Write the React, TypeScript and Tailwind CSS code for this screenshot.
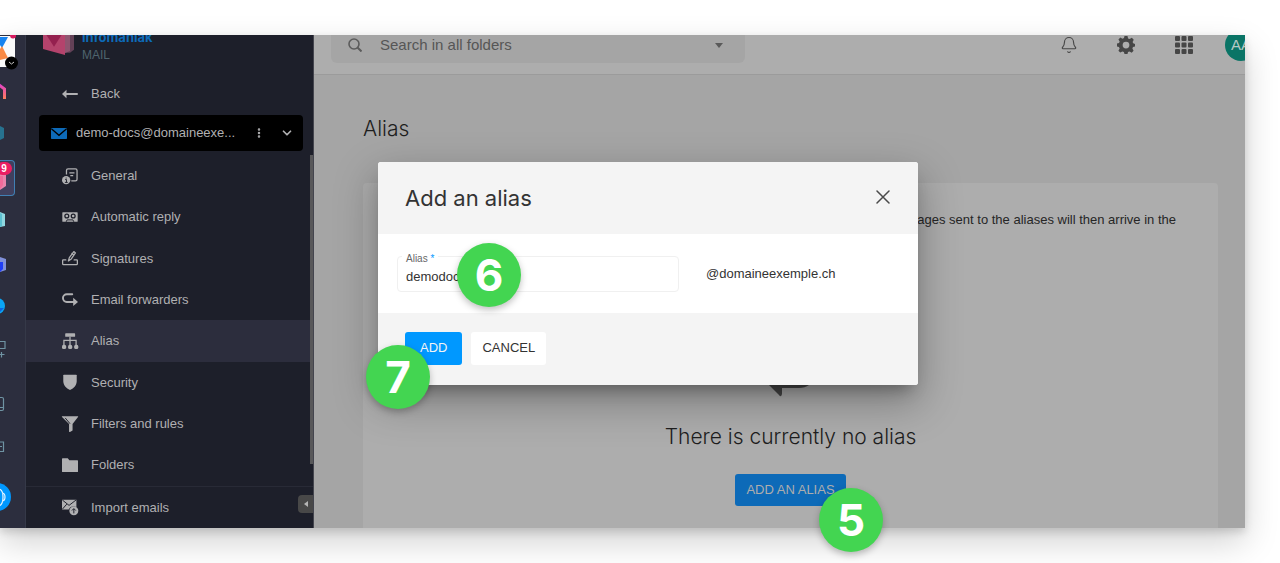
import React, { useState } from 'react';
import { Bell, ChevronDown, MoreVertical } from 'lucide-react';

interface MenuItem {
  label: string;
  icon: React.ReactNode;
  active?: boolean;
}

const MenuIcon: React.FC<{ children: React.ReactNode }> = ({ children }) => (
  <svg viewBox="0 0 50 50" className="h-4 w-4 shrink-0 overflow-visible" fill="currentColor" stroke="none" aria-hidden="true">
    {children}
  </svg>
);

const menuItems: MenuItem[] = [
  {
    label: 'General',
    icon: (
      <MenuIcon>
        <path d="M14 20V8a5 5 0 0 1 5-5h23a5 5 0 0 1 5 5v27a5 5 0 0 1-5 5H29M23 15h16M26 24h9" fill="none" stroke="currentColor" strokeWidth="4" />
        <circle cx="13" cy="38" r="13" />
        <path d="M10 36h4v9M9 45h9M13 30v3" fill="none" stroke="#1d1f2a" strokeWidth="3" />
      </MenuIcon>
    ),
  },
  {
    label: 'Automatic reply',
    icon: (
      <MenuIcon>
        <rect x="1" y="10" width="48" height="30" rx="2" />
        <g fill="none" stroke="#1d1f2a" strokeWidth="4">
          <circle cx="15" cy="22" r="6" />
          <circle cx="35" cy="22" r="6" />
          <path d="M13 40l3-6h18l3 6" strokeWidth="3" />
        </g>
      </MenuIcon>
    ),
  },
  {
    label: 'Signatures',
    icon: (
      <MenuIcon>
        <g fill="none" stroke="currentColor" strokeWidth="4" strokeLinejoin="round" strokeLinecap="round">
          <path d="M12 31H4a2 2 0 0 0-2 2v10a3 3 0 0 0 3 3h40a3 3 0 0 0 3-3V33a2 2 0 0 0-2-2h-8" />
          <path d="M20 34l3-10L37 5l5 4-14 20zM31 11l6 5" />
        </g>
      </MenuIcon>
    ),
  },
  {
    label: 'Email forwarders',
    icon: (
      <MenuIcon>
        <path d="M32 7H15a12 12 0 0 0 0 24h22" fill="none" stroke="currentColor" strokeWidth="6" strokeLinecap="round" />
        <path d="M35 18l15 13-15 13z" />
      </MenuIcon>
    ),
  },
  {
    label: 'Alias',
    active: true,
    icon: (
      <MenuIcon>
        <rect x="10" y="1" width="31" height="11" rx="2" />
        <path d="M25 12v30M6 42V23h38v19" fill="none" stroke="currentColor" strokeWidth="4" />
        <rect x="0" y="37" width="13" height="13" rx="5" />
        <rect x="19" y="37" width="13" height="13" rx="5" />
        <rect x="38" y="37" width="13" height="13" rx="5" />
      </MenuIcon>
    ),
  },
  {
    label: 'Security',
    icon: (
      <MenuIcon>
        <path d="M6 2h38a2 2 0 0 1 2 2v18c0 14-9 22-21 28C13 44 4 36 4 22V4a2 2 0 0 1 2-2z" />
      </MenuIcon>
    ),
  },
  {
    label: 'Filters and rules',
    icon: (
      <MenuIcon>
        <path d="M2 1h47a1 1 0 0 1 1 2L33 25v20l-8 5a2 2 0 0 1-3-2V25L0 3a1 1 0 0 1 2-2z" />
        <path d="M10 6l15 18" stroke="#1d1f2a" strokeWidth="3" />
      </MenuIcon>
    ),
  },
  {
    label: 'Folders',
    icon: (
      <MenuIcon>
        <path d="M2 4h16l5 6h25a2 2 0 0 1 2 2v33a2 2 0 0 1-2 2H2a2 2 0 0 1-2-2V6a2 2 0 0 1 2-2z" />
      </MenuIcon>
    ),
  },
  {
    label: 'Import emails',
    icon: (
      <MenuIcon>
        <path d="M0 2h45v24A16 16 0 0 0 21 33H0z" />
        <path d="M1 3l21 17L44 3M1 32l14-16" fill="none" stroke="#1d1f2a" strokeWidth="3" />
        <circle cx="37" cy="37" r="14" />
        <path d="M37 45V31M31 36l6-6 6 6" fill="none" stroke="#1d1f2a" strokeWidth="3" />
      </MenuIcon>
    ),
  },
];

const AppRail = () => (
  <nav aria-label="Apps" className="flex w-[25px] shrink-0 flex-col overflow-hidden bg-[#2c2e3e]">
    <a href="#workspace" className="block h-[37px]" aria-label="Workspace">
      <svg viewBox="0 35 25 37" className="h-full w-full">
        <path d="M0 36h15v31H0z" fill="#fafafa" />
        <path d="M10 35h6a3 3 0 0 1-6 1z" fill="#d81b60" />
        <path d="M0 37h8L2 48l-2-3z" fill="#1583f0" />
        <path d="M2 46l6 12-8 2V49z" fill="#f98a45" />
        <circle cx="11.500" cy="63" r="6.500" />
        <path d="M9 62l2.500 2L14 62" fill="none" stroke="#ccc" />
      </svg>
    </a>
    <a href="#home" className="block h-10" aria-label="Home">
      <svg viewBox="0 72 25 40" className="h-full w-full">
        <defs>
          <linearGradient id="home" x1="0" y1="0" x2="0" y2="1">
            <stop offset="0" stopColor="#e040c8" />
            <stop offset="1" stopColor="#ff7f5a" />
          </linearGradient>
        </defs>
        <path d="M-2 84l6.500 5v10" fill="none" stroke="url(#home)" strokeWidth="3" />
      </svg>
    </a>
    <a href="#drive" className="block h-11" aria-label="Drive">
      <svg viewBox="0 112 25 44" className="h-full w-full">
        <path d="M0 126l4 2v10l-4 2z" fill="#27728f" />
      </svg>
    </a>
    <a href="#mail" className="relative my-1 block h-9 w-[15px] rounded-r border border-l-0 border-[#4180b4] bg-[#40405e]" aria-label="Mail">
      <svg viewBox="0 161 14 34" className="h-full w-full">
        <path d="M0 174h6v12l-6 4z" fill="#e884ac" />
        <path d="M0 176h3v9l-3 4z" fill="#f06a9b" />
      </svg>
      <span className="absolute top-px -left-1 flex h-[13px] w-4 items-center justify-center rounded-full bg-[#ea1e63] text-[10px] font-bold text-white">9</span>
    </a>
    <a href="#calendar" className="block h-[42px]" aria-label="Calendar">
      <svg viewBox="0 200 25 42" className="h-full w-full">
        <path d="M0 212l5 2v12l-5 1z" fill="#8fd6df" />
        <path d="M0 213l2 1v12l-2 1z" fill="#5cbfd0" />
      </svg>
    </a>
    <a href="#chat" className="block h-11" aria-label="Chat">
      <svg viewBox="0 242 25 44" className="h-full w-full">
        <path d="M0 257l6 2v11l-6 2z" fill="#8090d8" />
        <path d="M0 262h3v7l-3 3z" fill="#1f3df5" />
      </svg>
    </a>
    <a href="#sites" className="block h-[41px]" aria-label="Sites">
      <svg viewBox="0 286 25 41" className="h-full w-full">
        <circle cx="-3" cy="306" r="8" fill="#0aa5f5" />
        <path d="M0 308h4l-4 4z" fill="#0c63e0" />
      </svg>
    </a>
    <a href="#more" className="block h-[47px]" aria-label="More apps">
      <svg viewBox="0 327 25 47" className="h-full w-full" fill="none" stroke="#6f93a3">
        <path d="M0 341.500h5v7H0M-1 354.500h5.500M1.500 352v5.500" strokeWidth="1.200" />
      </svg>
    </a>
    <a href="#devices" className="block h-[51px]" aria-label="Devices">
      <svg viewBox="0 374 25 51" className="h-full w-full" fill="none" stroke="#6f93a3">
        <path d="M0 397.500h2q1.500 0 1.500 1.500v10q0 1.500-1.500 1.500H0M0 407.500h3" strokeWidth="1.200" />
      </svg>
    </a>
    <a href="#logout" className="block h-[43px]" aria-label="Sign out">
      <svg viewBox="0 425 25 43" className="h-full w-full" fill="none" stroke="#6f93a3">
        <path d="M0 442h3.500v9.500H0M0 446.500h2" strokeWidth="1.200" />
      </svg>
    </a>
    <a href="#support" className="block h-[58px]" aria-label="Support">
      <svg viewBox="0 468 25 58" className="h-full w-full">
        <circle cx="-3" cy="497" r="14" fill="#0098ff" />
        <path d="M-2 489c4 0 5 4 5 8s-1 8-4 9M2 493q3 0 3 4t-3 4" fill="none" stroke="#e6f4ff" strokeWidth="1.200" />
      </svg>
    </a>
  </nav>
);

const Sidebar = () => (
  <aside className="relative flex w-[289px] shrink-0 flex-col border-x border-l-[#353948] border-r-[#44454e] bg-[#1d1f2a] text-[13px] text-[#b0b0b2]">
    <div className="-mt-2 flex h-[47px] shrink-0 pl-[17px]">
      <svg viewBox="0 0 93 84" className="h-7 w-[31px] shrink-0" aria-hidden="true">
        <path d="M66 8h27v60l-12 9H66z" fill="#634157" />
        <path d="M60 8h21v64l-15 6z" fill="#8f5570" />
        <path d="M0 8h66v76L0 66z" fill="#b4436c" />
        <path d="M0 8h66L33 59z" fill="#94204f" />
      </svg>
      <div className="pl-2">
        <div className="font-[Inter,sans-serif] leading-5 font-bold text-[#0d6ab8]">infomaniak</div>
        <div className="text-xs leading-4 text-[#4f646e]">MAIL</div>
      </div>
    </div>
    <a href="#back" className="flex h-10 shrink-0 items-center gap-[13px] pl-9">
      <MenuIcon>
        <path d="M12 25h35" stroke="currentColor" strokeWidth="6" strokeLinecap="round" />
        <path d="M0 25l14-13v26z" />
      </MenuIcon>
      Back
    </a>
    <div className="mt-px mr-[10px] ml-[13px] flex h-9 shrink-0 items-center rounded bg-black pl-3">
      <svg viewBox="0 0 48 33" className="h-[11px] w-4 shrink-0" aria-hidden="true">
        <rect width="48" height="33" rx="2" fill="#0d6ab8" />
        <path d="M1 2l23 20L47 2" fill="none" stroke="#000" strokeWidth="4" />
      </svg>
      <span className="flex-1 pl-[9px]">demo-docs@domaineexe...</span>
      <button aria-label="Account options" className="mr-[15px]"><MoreVertical size={12} strokeWidth={3} /></button>
      <button aria-label="Change account" className="mr-[9px]"><ChevronDown size={14} strokeWidth={3} /></button>
    </div>
    <ul className="mt-1 flex min-h-0 flex-1 flex-col">
      {menuItems.map((item) => (
        <li key={item.label} className="flex-1 last:border-t last:border-[#282a36]">
          <a href="#settings" className={`flex h-full items-center gap-[13px] pl-9 ${item.active ? 'bg-[#2c2d3d]' : ''}`}>
            {item.icon}
            {item.label}
          </a>
        </li>
      ))}
    </ul>
    <div className="absolute top-[120px] right-0 bottom-16 w-[3px] bg-[#58585a]" />
    <button aria-label="Collapse menu" className="absolute right-0 bottom-[15px] flex h-[18px] w-[15px] items-center justify-center rounded-l bg-[#484848]">
      <svg viewBox="0 0 4 6" className="h-[6px] w-1"><path d="M4 0v6L0 3z" fill="#b5b5b5" /></svg>
    </button>
  </aside>
);

const TopBar = () => (
  <header className="-mt-2 flex h-12 shrink-0 items-start justify-between border-b border-[#9b9b9b] bg-[#adadad] pl-[17px]">
    <div className="flex h-9 w-[414px] items-center rounded-md bg-[#a5a5a5] pr-[22px] pl-[17px]">
      <svg viewBox="0 0 14 14" className="h-[14px] w-[14px] shrink-0" fill="none" stroke="#5c5c5c" strokeWidth="1.600" aria-hidden="true">
        <circle cx="6" cy="6" r="5" />
        <path d="M9.500 9.500L13.500 13.500" strokeWidth="2" />
      </svg>
      <input aria-label="Search in all folders" placeholder="Search in all folders" className="ml-[18px] min-w-0 flex-1 bg-transparent text-[15px] outline-none placeholder:text-[#565656]" />
      <button aria-label="Search options">
        <svg viewBox="0 0 8 5" className="h-[5px] w-2"><path d="M0 0h8L4 5z" fill="#5a5a5a" /></svg>
      </button>
    </div>
    <div className="-mr-3 flex h-9 shrink-0 items-center text-[#464646]">
      <button aria-label="Notifications" className="mr-[39px]"><Bell size={18} strokeWidth={1.5} /></button>
      <button aria-label="Settings" className="mr-10">
        <svg viewBox="0 0 24 24" className="h-[18px] w-[18px]" fill="currentColor">
          <path fillRule="evenodd" d="M10 0h4l.8 3.200 2 .9 3-1.700 2.500 2.500-1.500 3 .8 1.900L24 10.500v3.500l-2.700.8-.8 2 1.600 2.900-2.500 2.500-3-1.600-1.900.8L14 24h-4l-.8-2.700-2-.8-2.900 1.600-2.400-2.500 1.600-2.900-.9-2L0 14v-4l2.700-.7.9-2-1.700-2.800 2.500-2.400 2.900 1.500 2-.8zM12 7.500a4.500 4.500 0 1 0 0 9 4.500 4.500 0 0 0 0-9z" />
        </svg>
      </button>
      <button aria-label="Apps" className="mr-8">
        <svg viewBox="0 0 18 18" className="h-[18px] w-[18px]" fill="currentColor">
          {[0, 6.5, 13].map((y) => [0, 6.5, 13].map((x) => <rect key={`${x}-${y}`} x={x} y={y} width="5" height="5" rx="1" />))}
        </svg>
      </button>
      <button aria-label="Account" className="flex h-8 w-8 items-center justify-center rounded-full bg-[#0a7466] text-[15px] text-[#b5c8c4]">AA</button>
    </div>
  </header>
);

const AliasPage = () => (
  <main className="flex flex-1 flex-col pt-[40px] pr-[27px] pl-[49px]">
    <h1 className="font-[Inter,sans-serif] text-[21px] leading-7 font-light text-[#1e1e1e]">Alias</h1>
    <section className="mt-10 flex flex-1 flex-col items-center rounded-t bg-[#adadad]">
      <p className="mt-7 w-full pr-[42px] text-right text-[13px] leading-[18px] text-[#262626]">messages sent to the aliases will then arrive in the</p>
      <svg viewBox="0 0 64 64" className="mt-[104px] h-16 w-16 shrink-0" fill="#484848" aria-hidden="true">
        <path d="M2 44L20 62q2 3 3-1v-6h17q6 0 10-3l6-20H23v-7z" />
      </svg>
      <h2 className="mt-[26px] font-[Inter,sans-serif] text-[21px] leading-7 font-light text-[#1e1e1e]">There is currently no alias</h2>
      <button className="mt-[23px] h-8 shrink-0 rounded-[3px] bg-[#0d6ab8] px-[11px] text-[13px] text-[#adadad]">ADD AN ALIAS</button>
    </section>
  </main>
);

const StepBadge: React.FC<{ step: number; className: string }> = ({ step, className }) => (
  <div className={`flex h-16 w-16 items-center justify-center rounded-full bg-[#43d551] font-[Inter,sans-serif] text-[44px] leading-none font-bold text-white shadow-[0_3px_7px_rgba(0,0,0,0.25)] ${className}`}>
    {step}
  </div>
);

const AddAliasDialog = () => {
  const [alias, setAlias] = useState('demodocs');

  return (
    <form
      role="dialog"
      aria-label="Add an alias"
      onSubmit={(e) => e.preventDefault()}
      className="relative w-[540px] rounded-[3px] bg-white text-[13px] text-[#333] shadow-[0_11px_15px_-7px_rgba(0,0,0,0.3),0_16px_42px_3px_rgba(0,0,0,0.28)]"
    >
      <div className="flex h-[72px] items-center justify-between rounded-t-[3px] bg-[#f4f4f4] pr-7 pl-[27px]">
        <h2 className="font-[Inter,sans-serif] text-[22px] leading-7">Add an alias</h2>
        <button type="button" aria-label="Close" className="pb-[3px] text-[#4a4a4a]">
          <svg viewBox="0 0 14 14" className="h-[14px] w-[14px]" fill="none" stroke="currentColor" strokeWidth="1.500" strokeLinecap="round">
            <path d="M1 1l12 12M13 1L1 13" />
          </svg>
        </button>
      </div>
      <div className="flex h-[79px] items-center pl-[19px]">
        <div className="relative h-9 w-[282px] rounded border border-[#f0f0f0]">
          <label htmlFor="alias" className="absolute -top-[5px] left-1 bg-white px-1 text-[10px] leading-[14px] text-[#666]">
            Alias <span className="text-[#0098ff]">*</span>
          </label>
          <input id="alias" value={alias} onChange={(e) => setAlias(e.target.value)} className="h-full w-full bg-transparent pt-[6px] pl-2 outline-none" />
        </div>
        <span className="pl-[27px]">@domaineexemple.ch</span>
        <StepBadge step={6} className="absolute top-[81px] left-[79px]" />
      </div>
      <div className="flex h-[72px] items-center gap-[9px] rounded-b-[3px] bg-[#f4f4f4] pb-[2px] pl-[27px]">
        <button type="submit" className="h-[33px] rounded-[3px] bg-[#0098ff] px-[15px] text-[#f4f4f4]">ADD</button>
        <button type="button" className="h-[33px] rounded-[3px] bg-white px-[11px]">CANCEL</button>
      </div>
      <StepBadge step={7} className="absolute top-[183px] -left-3" />
    </form>
  );
};

const App = () => (
  <div className="relative flex h-screen overflow-hidden bg-white py-[35px] pr-[35px] font-['Liberation_Sans',Arial,sans-serif]">
    <div className="relative flex min-w-0 flex-1 shadow-[0_4px_8px_rgba(0,0,0,0.14),0_14px_32px_rgba(0,0,0,0.18)]">
      <div className="flex min-w-0 flex-1 overflow-hidden">
        <AppRail />
        <Sidebar />
        <div className="relative flex min-w-0 flex-1 flex-col bg-[#a5a5a5]">
          <TopBar />
          <AliasPage />
        </div>
      </div>
      <div className="absolute inset-0 flex items-center justify-center pb-4 pl-[51px]">
        <AddAliasDialog />
      </div>
      <StepBadge step={5} className="absolute right-[362px] -bottom-6" />
    </div>
  </div>
);

export default App;
